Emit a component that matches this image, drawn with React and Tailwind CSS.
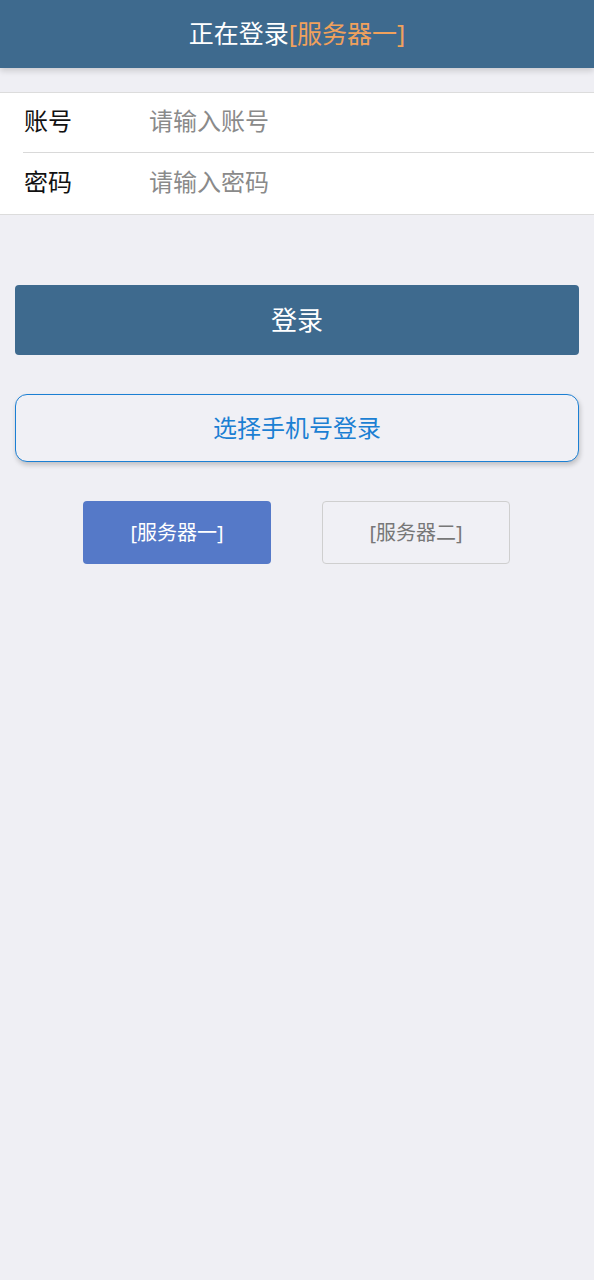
import React from 'react';

const font = { fontFamily: '"Noto Sans", "Noto Sans CJK SC", sans-serif' };

const Row = ({ label, placeholder, divider, h }) => (
  <div className={`flex items-center ${h}`}>
    <div className={`flex h-full flex-1 items-center ml-[23px] pb-[3px] ${divider ? 'border-b border-[#d9d9d9]' : ''}`}>
      <span className="w-[126px] pl-px text-[24px] text-[#111]">{label}</span>
      <span className="text-[24px] text-[#8a8a8a]">{placeholder}</span>
    </div>
  </div>
);

const App = () => {
  return (
    <div className="min-h-[1280px] bg-[#efeff4]" style={font}>
      <header className="relative z-10 flex h-[68px] items-center justify-center bg-[#3e6a8e] shadow-[0_3px_6px_rgba(0,0,0,0.15)]">
        <h1 className="text-[25px] text-white">
          正在登录<span className="text-[#f0a15c]">[服务器一]</span>
        </h1>
      </header>

      <div className="mt-6 border-y border-[#dcdcdc] bg-white">
        <Row label="账号" placeholder="请输入账号" divider h="h-[60px]" />
        <Row label="密码" placeholder="请输入密码" h="h-[61px]" />
      </div>

      <div className="px-[15px] pt-[70px]">
        <button className="flex h-[70px] w-full items-center justify-center rounded-[4px] bg-[#3e6a8e] text-[26px] text-white">
          登录
        </button>

        <button className="mt-[39px] flex h-[68px] w-full items-center justify-center rounded-[12px] border border-[#1b7fd3] bg-[#f0f0f5] text-[24px] text-[#1b7fd3] shadow-[1px_3px_5px_rgba(0,0,0,0.2)]">
          选择手机号登录
        </button>
      </div>

      <div className="mt-[39px] flex justify-center gap-[51px] pr-px">
        <button className="flex h-[63px] w-[188px] items-center justify-center rounded-[4px] bg-[#5579c8] text-[20px] text-white">
          [服务器一]
        </button>
        <button className="flex h-[63px] w-[188px] items-center justify-center rounded-[4px] border border-[#cfcfcf] bg-[#f0f0f5] text-[20px] text-[#777]">
          [服务器二]
        </button>
      </div>
    </div>
  );
};

export default App;
